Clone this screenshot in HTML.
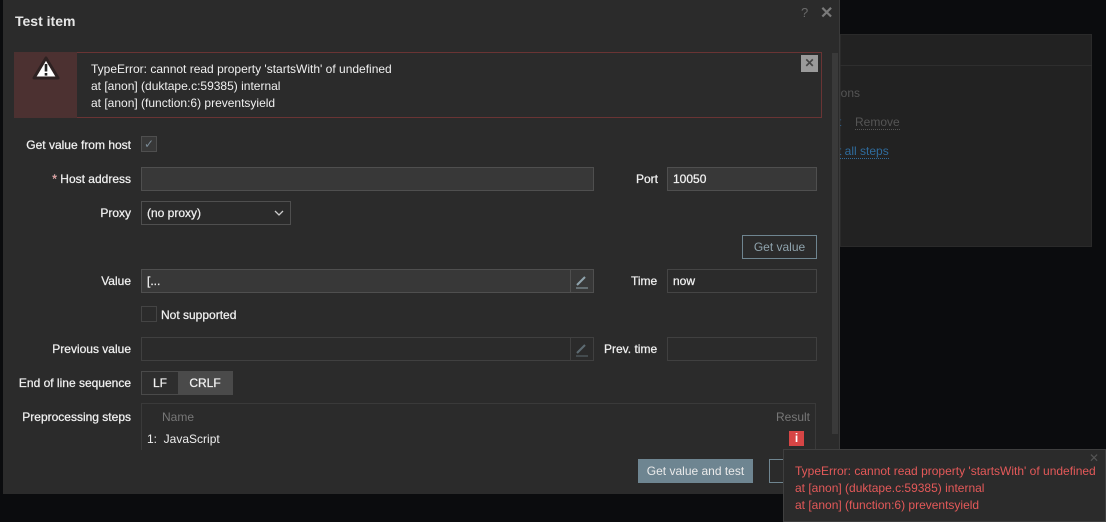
<!DOCTYPE html>
<html><head><style>
*{box-sizing:border-box;margin:0;padding:0}
body{width:1106px;height:522px;background:#0b0c0e;font-family:"Liberation Sans",sans-serif;font-size:12px;color:#f2f2f2;position:relative;overflow:hidden}
.a{position:absolute}
.lbl{position:absolute;text-align:right;width:131px;left:0;color:#f0f0f0;-webkit-text-stroke:0.25px #f0f0f0}
.inp{position:absolute;background:#383838;border:1px solid #4f4f4f;height:24px;padding:4px 5px;-webkit-text-stroke:0.25px #f0f0f0}
.inpd{position:absolute;background:#2b2b2b;border:1px solid #404040;height:24px}
</style></head><body>
<div class="a" style="left:840px;top:34px;width:252px;height:213px;background:#222;border:1px solid #2a2a2a"></div>
<div class="a" style="left:840px;top:65px;width:252px;height:1px;background:#2e2e2e"></div>
<div class="a" style="left:838px;top:86px;color:#555;font-size:12px">ions</div>
<div class="a" style="left:838px;top:115px;color:#2f5f8a;font-size:12px">t</div>
<div class="a" style="left:855px;top:115px;color:#555;font-size:12px;border-bottom:1px dotted #555">Remove</div>
<div class="a" style="left:838px;top:144px;color:#2f6b9c;font-size:12px;border-bottom:1px dotted #2f6b9c">t all steps</div>

<div class="a" style="left:3px;top:0;width:837px;height:494px;background:#2b2b2b;border-right:1px solid #3a3a3a"></div>
<div class="a" style="left:15px;top:13px;font-size:14px;font-weight:bold;color:#e6e6e6">Test item</div>
<div class="a" style="left:801px;top:5px;color:#6a6a6a;font-size:13px">?</div>
<div class="a" style="left:820px;top:3px;color:#7a7a7a;font-size:16px;font-weight:bold">✕</div>
<div class="a" style="left:832px;top:53px;width:6px;height:381px;background:#3a3a3a"></div>

<div class="a" style="left:14px;top:52px;width:808px;height:66px;border:1px solid #6a3434;background:#2b2b2b"></div>
<div class="a" style="left:14px;top:52px;width:63px;height:66px;background:#4c3131"></div>
<svg class="a" style="left:32px;top:55px" width="28" height="26" viewBox="0 0 28 26"><path d="M14 3 L26 23 L2 23 Z" fill="#fff" stroke="#2e2222" stroke-width="3" stroke-linejoin="round"/><rect x="12.7" y="9" width="2.6" height="7.5" fill="#222"/><rect x="12.7" y="18" width="2.6" height="2.6" fill="#222"/></svg>
<div class="a" style="left:91px;top:61px;line-height:17px;color:#f0f0f0">TypeError: cannot read property 'startsWith' of undefined<br>at [anon] (duktape.c:59385) internal<br>at [anon] (function:6) preventsyield</div>
<div class="a" style="left:801px;top:55px;width:17px;height:17px;background:#9a9a9a;color:#444;text-align:center;font-size:12px;line-height:17px;font-weight:bold">✕</div>

<div class="lbl" style="top:138px">Get value from host</div>
<div class="a" style="left:141px;top:136px;width:16px;height:16px;background:#383838;border:1px solid #4f4f4f;color:#7a8a96;font-size:12px;line-height:14px;text-align:center">✓</div>

<div class="lbl" style="top:172px"><span style="color:#e45959">*</span> Host address</div>
<div class="inp" style="left:141px;top:167px;width:453px"></div>
<div class="a" style="left:636px;top:172px;color:#f0f0f0;-webkit-text-stroke:0.25px #f0f0f0">Port</div>
<div class="inp" style="left:667px;top:167px;width:150px">10050</div>

<div class="lbl" style="top:206px">Proxy</div>
<div class="inp" style="left:141px;top:201px;width:150px;background:#2b2b2b;color:#eee">(no proxy)<svg style="position:absolute;right:6px;top:8px" width="10" height="6"><path d="M1 1 L5 5 L9 1" stroke="#ccc" fill="none" stroke-width="1.3"/></svg></div>

<div class="a" style="left:742px;top:235px;width:75px;height:24px;border:1px solid #6f8590;color:#8fa3ad;text-align:center;line-height:22px">Get value</div>

<div class="lbl" style="top:274px">Value</div>
<div class="inp" style="left:141px;top:269px;width:453px">[...</div>
<div class="a" style="left:570px;top:269px;width:24px;height:24px;border:1px solid #4f4f4f;background:#383838"><svg width="22" height="22"><path d="M6 15 L14 7" stroke="#8fa3ad" stroke-width="2"/><path d="M5 18 H17" stroke="#8fa3ad" stroke-width="1"/></svg></div>
<div class="a" style="left:631px;top:274px;color:#f0f0f0;-webkit-text-stroke:0.25px #f0f0f0">Time</div>
<div class="inp" style="left:667px;top:269px;width:150px;background:#2b2b2b;border-color:#454545">now</div>

<div class="a" style="left:141px;top:306px;width:16px;height:16px;border:1px solid #444;background:#2b2b2b"></div>
<div class="a" style="left:161px;top:308px;color:#f0f0f0;-webkit-text-stroke:0.25px #f0f0f0">Not supported</div>

<div class="lbl" style="top:342px">Previous value</div>
<div class="inpd" style="left:141px;top:337px;width:453px"></div>
<div class="a" style="left:570px;top:337px;width:24px;height:24px;border:1px solid #404040"><svg width="22" height="22"><path d="M6 15 L14 7" stroke="#5d6b72" stroke-width="2"/><path d="M5 18 H17" stroke="#5d6b72" stroke-width="1"/></svg></div>
<div class="a" style="left:604px;top:342px;color:#f0f0f0;-webkit-text-stroke:0.25px #f0f0f0">Prev. time</div>
<div class="inpd" style="left:667px;top:337px;width:150px"></div>

<div class="lbl" style="top:376px">End of line sequence</div>
<div class="a" style="left:141px;top:371px;width:92px;height:24px;border:1px solid #4a4a4a;background:#2e2e2e"></div>
<div class="a" style="left:153px;top:376px;-webkit-text-stroke:0.25px #f0f0f0">LF</div>
<div class="a" style="left:178px;top:372px;width:54px;height:22px;background:#4a4a4a;text-align:center;line-height:22px;-webkit-text-stroke:0.25px #f0f0f0">CRLF</div>

<div class="lbl" style="top:410px">Preprocessing steps</div>
<div class="a" style="left:141px;top:403px;width:675px;height:47px;border:1px solid #3a3a3a;border-bottom:none"></div>
<div class="a" style="left:162px;top:410px;color:#777">Name</div>
<div class="a" style="left:776px;top:410px;color:#777">Result</div>
<div class="a" style="left:147px;top:432px;color:#eee">1:&nbsp; JavaScript</div>
<div class="a" style="left:789px;top:431px;width:15px;height:15px;background:#d64545;color:#fff;font-weight:bold;text-align:center;line-height:15px;font-size:12px">i</div>

<div class="a" style="left:638px;top:459px;width:115px;height:24px;background:#6e8591;color:#eaeaea;text-align:center;line-height:24px">Get value and test</div>
<div class="a" style="left:769px;top:459px;width:30px;height:24px;border:1px solid #6f8590"></div>

<div class="a" style="left:783px;top:449px;width:323px;height:73px;background:#2b2b2b;border:1px solid #3f3f3f"></div>
<div class="a" style="left:1089px;top:451px;color:#555;font-size:12px">✕</div>
<div class="a" style="left:795px;top:463px;line-height:17px;color:#e45959">TypeError: cannot read property 'startsWith' of undefined<br>at [anon] (duktape.c:59385) internal<br>at [anon] (function:6) preventsyield</div>
</body></html>
